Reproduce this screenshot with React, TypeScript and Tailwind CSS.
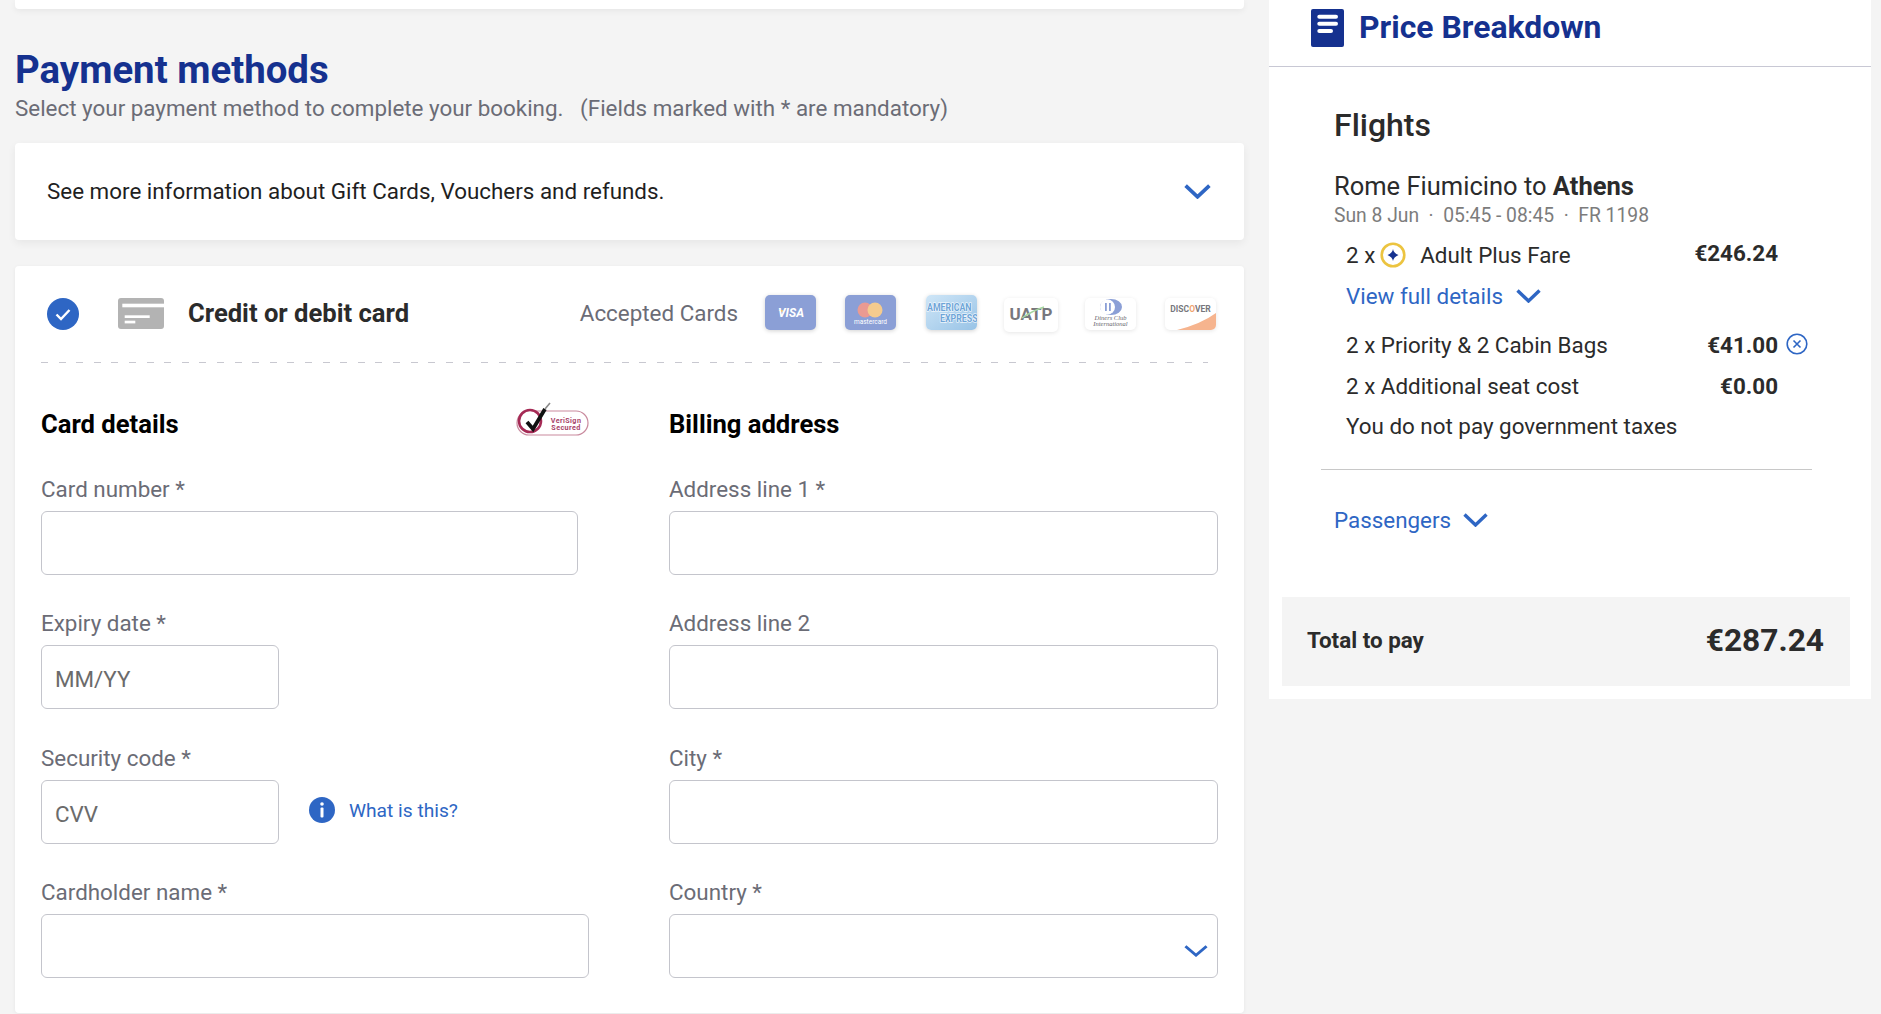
const labelClass = "h-[40px] text-[22.4px] leading-[37px] text-[#6b6c76]";
const inputClass =
  "block h-[64px] w-full rounded-[6px] border border-[#c4c5cc] bg-white px-[13px] pt-[4px] text-[22.4px] text-[#6b6b6b] outline-none placeholder:text-[#6b6b6b]";

function Chevron({ className, strokeWidth = 3.4 }: { className: string; strokeWidth?: number }) {
  return (
    <svg viewBox="0 0 25 14" preserveAspectRatio="none" className={"shrink-0 " + className}>
      <path d="M1.500 1.500L12.500 12L23.500 1.500" fill="none" stroke="#2e66c4" strokeWidth={strokeWidth} />
    </svg>
  );
}

function Field({
  label,
  placeholder,
  width,
}: {
  label: string;
  placeholder?: string;
  width: string;
}) {
  return (
    <div>
      <div className={labelClass}>{label}</div>
      <div className={width}>
        <input className={inputClass} placeholder={placeholder} readOnly />
      </div>
    </div>
  );
}

function CardBox({ children, className }: { children: React.ReactNode; className?: string }) {
  return (
    <div
      className={
        "h-[35px] w-[51px] shrink-0 overflow-hidden rounded-[5px] shadow-[0_1px_4px_rgba(0,0,0,0.18)] " +
        (className || "")
      }
    >
      {children}
    </div>
  );
}

function VisaLogo() {
  return (
    <CardBox className="bg-[#8b9fd6]">
      <svg viewBox="0 0 51 35" className="h-full w-full">
        <path d="M13 15l5 0 1 3z" fill="#e8c070" />
        <text x="26" y="22" textAnchor="middle" fontSize="12" fontWeight="700" fontStyle="italic" fill="#fff">
          VISA
        </text>
      </svg>
    </CardBox>
  );
}

function MastercardLogo() {
  return (
    <CardBox className="ml-[29px] bg-[#8b9fd6]">
      <svg viewBox="0 0 51 35" className="h-full w-full">
        <circle cx="20" cy="15" r="7.5" fill="#ea9a92" />
        <circle cx="30" cy="15" r="7.5" fill="#f4cb8e" />
        <text x="25.5" y="29" textAnchor="middle" fontSize="6.5" fill="#fff">
          mastercard
        </text>
      </svg>
    </CardBox>
  );
}

function AmexLogo() {
  return (
    <CardBox className="ml-[30px] bg-linear-to-br from-[#cfe6f7] to-[#98c3e6]">
      <svg viewBox="0 0 51 35" className="h-full w-full">
        <g transform="scale(1 1.2)">
          <text x="1" y="13.3" fontSize="8.800" fontWeight="700" fill="#6ea5d8" stroke="#fff" strokeWidth="1" paintOrder="stroke">
            AMERICAN
          </text>
          <text x="14" y="22.500" fontSize="8.800" fontWeight="700" fill="#6ea5d8" stroke="#fff" strokeWidth="1" paintOrder="stroke">
            EXPRESS
          </text>
        </g>
      </svg>
    </CardBox>
  );
}

function UatpLogo() {
  return (
    <div className="ml-[27px] mb-[-2px] h-[34px] w-[54px] shrink-0 self-end rounded-[5px] bg-white shadow-[0_1px_4px_rgba(0,0,0,0.1)]">
      <svg viewBox="0 0 54 34" className="h-full w-full">
        <text x="27" y="22" textAnchor="middle" fontSize="17" fontWeight="700" fill="#77777d">
          UATP
        </text>
        <path d="M18 20q10-7 22-11" stroke="#a5d6a0" strokeWidth="1.4" fill="none" />
      </svg>
    </div>
  );
}

function DinersLogo() {
  return (
    <div className="ml-[27px] h-[32px] w-[51px] shrink-0 self-end rounded-[5px] bg-white shadow-[0_1px_4px_rgba(0,0,0,0.1)]">
      <svg viewBox="0 0 51 32" className="h-full w-full">
        <ellipse cx="26" cy="9" rx="11" ry="8" fill="#8b9fd6" />
        <circle cx="22.500" cy="9" r="7.500" fill="#fff" />
        <rect x="20" y="5" width="1.8" height="8" fill="#8b9fd6" />
        <rect x="24" y="5" width="1.8" height="8" fill="#8b9fd6" />
        <text x="25.5" y="22" textAnchor="middle" fontSize="6.5" fontStyle="italic" fontFamily="Liberation Serif, serif" fill="#66666c">
          Diners Club
        </text>
        <text x="25.5" y="28" textAnchor="middle" fontSize="6.5" fontStyle="italic" fontFamily="Liberation Serif, serif" fill="#66666c">
          International
        </text>
      </svg>
    </div>
  );
}

function DiscoverLogo() {
  return (
    <div className="ml-[29px] h-[32px] w-[51px] shrink-0 self-end overflow-hidden rounded-[5px] bg-white shadow-[0_1px_4px_rgba(0,0,0,0.1)]">
      <svg viewBox="0 0 51 32" className="h-full w-full">
        <path d="M12 32Q36 26 51 15V32z" fill="#f6b48e" />
        <text x="25.5" y="14" textAnchor="middle" fontSize="8.5" fontWeight="700" fill="#77777d">
          DISC
          <tspan fill="#f0a36e">O</tspan>
          VER
        </text>
      </svg>
    </div>
  );
}

function VerisignLogo() {
  return (
    <svg viewBox="0 0 74 38" className="mb-[13px] h-[38px] w-[74px] shrink-0">
      <rect x="2" y="12" width="71" height="24" rx="12" fill="#fff" stroke="#c98a9e" strokeWidth="1.2" />
      <circle cx="15" cy="22" r="11" fill="#fff" stroke="#a52a55" strokeWidth="2.6" />
      <path d="M12 23l6 7 12-20" fill="none" stroke="#111" strokeWidth="3.8" />
      <path d="M30 10l5-6" stroke="#888" strokeWidth="1.6" />
      <text x="51" y="23.500" textAnchor="middle" fontSize="7.200" fontWeight="700" letterSpacing="0.4" fill="#a8446a">
        VeriSign
      </text>
      <text x="51" y="30.500" textAnchor="middle" fontSize="7.200" fontWeight="700" letterSpacing="0.4" fill="#a8446a">
        Secured
      </text>
    </svg>
  );
}

function PaymentColumn() {
  return (
    <div className="ml-[15px] w-[1229px] shrink-0">
      <div className="h-[9px] rounded-b-[4px] bg-white shadow-[0_2px_6px_rgba(0,0,0,0.06)]" />
      <h1 className="mt-[38px] text-[38.4px] leading-[45px] font-bold text-[#15318f]">Payment methods</h1>
      <p className="mt-[1px] whitespace-pre text-[22.4px] leading-[30px] text-[#6b6c76]">
        {"Select your payment method to complete your booking.   (Fields marked with * are mandatory)"}
      </p>

      <div className="mt-[20px] flex h-[97px] items-center justify-between rounded-[4px] bg-white pl-[32px] pr-[33px] shadow-[0_3px_8px_rgba(0,0,0,0.06)]">
        <span className="text-[22.4px] text-[#1f1f1f]">See more information about Gift Cards, Vouchers and refunds.</span>
        <Chevron className="h-[15px] w-[27px]" />
      </div>

      <div className="mt-[26px] h-[747px] rounded-[4px] bg-white px-[26px] shadow-[0_1px_4px_rgba(0,0,0,0.06)]">
        <div className="flex h-[96px] items-center">
          <svg viewBox="0 0 32 32" className="mb-[1px] ml-[6px] h-[32px] w-[32px] shrink-0">
            <circle cx="16" cy="16" r="16" fill="#2e66c4" />
            <path d="M9.5 16.5l4.5 4.5 8.5-9" fill="none" stroke="#fff" strokeWidth="2.4" />
          </svg>
          <svg viewBox="0 0 46 31" className="mb-[1px] ml-[39px] h-[31px] w-[46px] shrink-0">
            <rect width="46" height="31" rx="3" fill="#b3b3b3" />
            <rect x="4.3" y="5.7" width="41.7" height="3.6" fill="#fff" />
            <rect x="6.7" y="17.3" width="25" height="2.7" fill="#fff" />
            <rect x="6.7" y="22.7" width="10.6" height="2.7" fill="#fff" />
          </svg>
          <span className="mb-[2px] ml-[24px] text-[25.6px] font-bold text-[#2b2b2b]">Credit or debit card</span>
          <span className="ml-auto text-[22.4px] text-[#6b6c76]">Accepted Cards</span>
          <div className="mb-[3px] ml-[27px] mr-[2px] flex h-[35px]">
            <VisaLogo />
            <MastercardLogo />
            <AmexLogo />
            <UatpLogo />
            <DinersLogo />
            <DiscoverLogo />
          </div>
        </div>
        <div className="h-[1px] w-[1167px] bg-[repeating-linear-gradient(90deg,#c8c8d0_0,#c8c8d0_7px,transparent_7px,transparent_17.6px)]" />

        <div className="mt-[46px] grid grid-cols-[548px_549px] gap-x-[80px]">
          <div className="flex h-[30px] items-center justify-between">
            <h2 className="text-[25.6px] leading-[30px] font-bold text-black">Card details</h2>
            <VerisignLogo />
          </div>
          <h2 className="text-[25.6px] leading-[30px] font-bold text-black">Billing address</h2>
        </div>

        <div className="mt-[32px] grid auto-rows-[134.33px] grid-cols-[548px_549px] gap-x-[80px]">
          <Field label="Card number *" width="w-[537px]" />
          <Field label="Address line 1 *" width="w-full" />
          <Field label="Expiry date *" placeholder="MM/YY" width="w-[238px]" />
          <Field label="Address line 2" width="w-full" />
          <div>
            <div className={labelClass}>Security code *</div>
            <div className="flex items-center">
              <div className="w-[238px]">
                <input className={inputClass} placeholder="CVV" readOnly />
              </div>
              <svg viewBox="0 0 26 26" className="mb-[4px] ml-[30px] h-[26px] w-[26px] shrink-0">
                <circle cx="13" cy="13" r="13" fill="#2e66c4" />
                <circle cx="13" cy="7" r="1.8" fill="#fff" />
                <rect x="11.5" y="10.5" width="3" height="10" rx="1" fill="#fff" />
              </svg>
              <span className="mb-[1px] ml-[14px] text-[19.2px] text-[#2e66c4]">What is this?</span>
            </div>
          </div>
          <Field label="City *" width="w-full" />
          <Field label="Cardholder name *" width="w-full" />
          <div>
            <div className={labelClass}>Country *</div>
            <div className="relative">
              <select className="block h-[64px] w-full appearance-none rounded-[6px] border border-[#c4c5cc] bg-white outline-none" />
              <Chevron className="absolute right-[10px] top-[31px] h-[12px] w-[24px]" strokeWidth={3} />
            </div>
          </div>
        </div>
      </div>
    </div>
  );
}

function PriceRow({
  label,
  price,
  icon,
  priceClass,
}: {
  label: React.ReactNode;
  price: string;
  icon?: React.ReactNode;
  priceClass?: string;
}) {
  return (
    <div className="flex items-start">
      <div className="flex w-[432px] items-start justify-between">
        <div className="flex items-center text-[22.4px] leading-[30px] text-[#2b2b2b]">{label}</div>
        <div className={"text-[22.4px] leading-[30px] font-bold text-[#2b2b2b] " + (priceClass || "")}>{price}</div>
      </div>
      {icon}
    </div>
  );
}

function PricePanel() {
  return (
    <div className="ml-[25px] w-[602px] shrink-0 self-start bg-white pb-[13px]">
      <div className="flex h-[67px] items-start border-b border-[#c8c8d4] pl-[42px]">
        <svg viewBox="0 0 33 38" className="mt-[9px] h-[38px] w-[33px] shrink-0">
          <rect width="33" height="38" rx="2" fill="#15318f" />
          <rect x="6.3" y="5.7" width="20.7" height="4" rx="2" fill="#fff" />
          <rect x="6.3" y="12.7" width="20.7" height="4" rx="2" fill="#fff" />
          <rect x="6.3" y="20" width="15.7" height="4" rx="2" fill="#fff" />
        </svg>
        <span className="ml-[15px] mt-[7px] text-[31.9px] leading-[40px] font-bold text-[#15318f]">Price Breakdown</span>
      </div>

      <div className="pl-[65px]">
        <div className="mt-[38px] text-[32px] leading-[40px] font-medium text-[#2b2b2b]">Flights</div>
        <div className="mt-[25px] text-[25.5px] leading-[32px] text-[#2b2b2b]">
          Rome Fiumicino to <span className="font-bold">Athens</span>
        </div>
        <div className="mt-[1px] whitespace-pre text-[19.3px] leading-[26px] text-[#7c7c7c]">
          {"Sun 8 Jun  ·  05:45 - 08:45  ·  FR 1198"}
        </div>

        <div className="ml-[12px]">
          <div className="mt-[11px]">
            <PriceRow
              price="€246.24"
              priceClass="-mt-[2px]"
              label={
                <>
                  2 x
                  <svg viewBox="0 0 26 26" className="ml-[5px] h-[26px] w-[26px] shrink-0">
                    <circle cx="13" cy="13" r="11.3" fill="#fff" stroke="#ecc440" strokeWidth="2.6" />
                    <path d="M13 7q.6 4 5.500 6q-4.900 2-5.500 6q-.6-4-5.500-6q4.900-2 5.500-6z" fill="#15318f" />
                  </svg>
                  <span className="ml-[14px]">Adult Plus Fare</span>
                </>
              }
            />
          </div>
          <div className="mt-[11px] flex h-[30px] items-center text-[22.4px] leading-[30px] text-[#2e66c4]">
            View full details
            <Chevron className="ml-[13px] h-[14px] w-[25px]" />
          </div>
          <div className="mt-[19px]">
            <PriceRow
              label="2 x Priority & 2 Cabin Bags"
              price="€41.00"
              icon={
                <svg viewBox="0 0 22 22" className="ml-[8px] mt-[3px] h-[22px] w-[22px] shrink-0">
                  <circle cx="11" cy="11" r="9.8" fill="none" stroke="#2e66c4" strokeWidth="1.6" />
                  <path d="M7.500 7.500l7 7M14.500 7.500l-7 7" stroke="#2e66c4" strokeWidth="1.6" />
                </svg>
              }
            />
          </div>
          <div className="mt-[11px]">
            <PriceRow label="2 x Additional seat cost" price="€0.00" />
          </div>
          <div className="mt-[10px] text-[22.4px] leading-[30px] text-[#2b2b2b]">You do not pay government taxes</div>
        </div>
      </div>

      <div className="ml-[52px] mt-[28px] h-[1px] w-[491px] bg-[#c8c8c8]" />

      <div className="ml-[65px] mt-[35px] flex h-[30px] items-center text-[22.4px] leading-[30px] text-[#2e66c4]">
        Passengers
        <Chevron className="ml-[12px] h-[14px] w-[25px]" />
      </div>

      <div className="ml-[13px] mr-[21px] mt-[62px] flex h-[89px] items-center justify-between bg-[#f4f4f4] pb-[2px] pl-[25px] pr-[26px]">
        <span className="text-[22.4px] font-bold text-[#2b2b2b]">Total to pay</span>
        <span className="text-[31.7px] font-bold text-[#2b2b2b]">€287.24</span>
      </div>
    </div>
  );
}

export default function App() {
  return (
    <div className="flex h-[1014px] w-[1881px] overflow-hidden bg-[#f4f4f4] font-[Roboto,sans-serif]">
      <PaymentColumn />
      <PricePanel />
    </div>
  );
}
